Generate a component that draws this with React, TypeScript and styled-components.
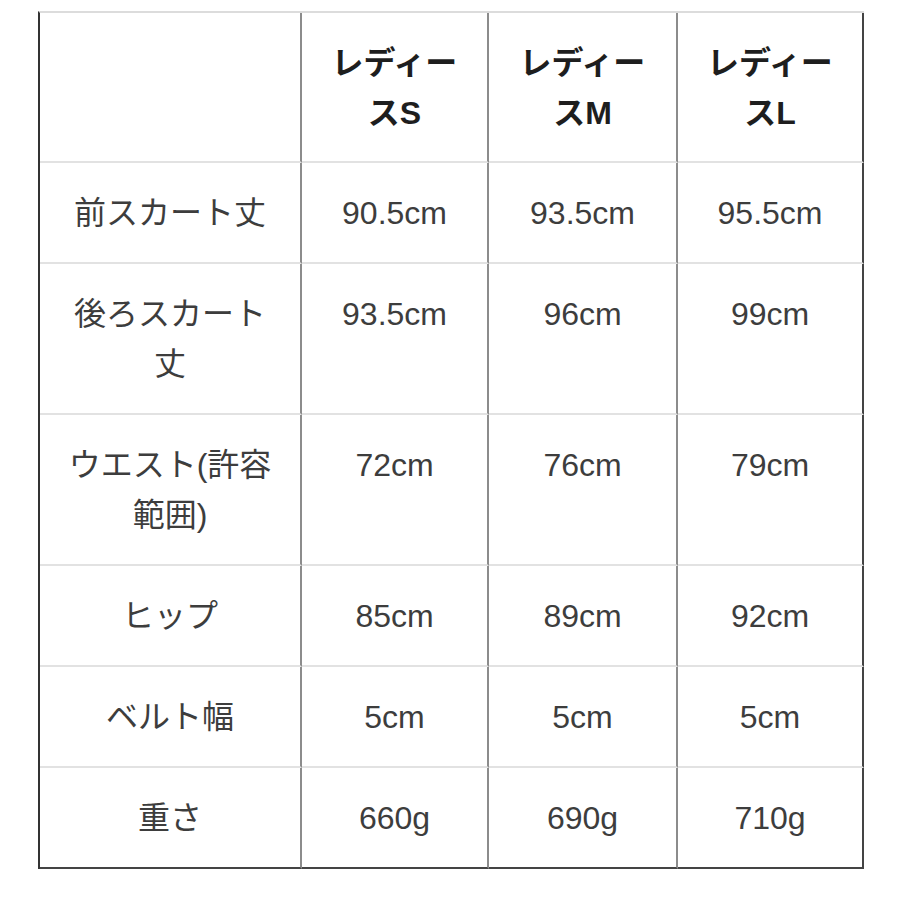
import styled, { createGlobalStyle } from 'styled-components';

const GlobalStyle = createGlobalStyle`
  html, body {
    margin: 0;
    padding: 0;
    background: #ffffff;
  }
  body {
    font-family: 'Liberation Sans', 'Noto Sans CJK JP', sans-serif;
  }
`;

const Page = styled.div`
  padding: 11px 0 0 38px;
`;

const Table = styled.table`
  width: 824px;
  table-layout: fixed;
  border-collapse: separate;
  border-spacing: 0;
  border-left: 2px solid #333333;
  border-top: 2px solid #dcdcdc;
`;

interface CellProps {
  $lastCol?: boolean;
  $lastRow?: boolean;
}

const Cell = styled.td<CellProps>`
  padding: 25px 4px 24px;
  text-align: center;
  vertical-align: top;
  font-size: 32px;
  line-height: 50px;
  color: #3d3d3d;
  border-right: 2px solid ${({ $lastCol }) => ($lastCol ? '#444444' : '#8c8c8c')};
  border-bottom: 2px solid ${({ $lastRow }) => ($lastRow ? '#444444' : '#e2e2e2')};
`;

const HeadCell = styled(Cell).attrs({ as: 'th' })`
  padding-bottom: 23px;
  font-weight: 700;
  color: #1e1e1e;
`;

const headers = [
  ['', ''],
  ['レディー', 'スS'],
  ['レディー', 'スM'],
  ['レディー', 'スL'],
];

const rows: Array<{ label: string[]; values: string[] }> = [
  { label: ['前スカート丈'], values: ['90.5cm', '93.5cm', '95.5cm'] },
  { label: ['後ろスカート', '丈'], values: ['93.5cm', '96cm', '99cm'] },
  { label: ['ウエスト(許容', '範囲)'], values: ['72cm', '76cm', '79cm'] },
  { label: ['ヒップ'], values: ['85cm', '89cm', '92cm'] },
  { label: ['ベルト幅'], values: ['5cm', '5cm', '5cm'] },
  { label: ['重さ'], values: ['660g', '690g', '710g'] },
];

const widths = [262, 187, 189, 186];

function Lines({ parts }: { parts: string[] }) {
  return (
    <>
      {parts.map((p, i) => (
        <span key={i}>
          {i > 0 && <br />}
          {p || '\u00a0'}
        </span>
      ))}
    </>
  );
}

export default function App() {
  return (
    <>
      <GlobalStyle />
      <Page>
        <Table>
          <colgroup>
            {widths.map((w, i) => (
              <col key={i} style={{ width: w }} />
            ))}
          </colgroup>
          <thead>
            <tr>
              {headers.map((h, i) => (
                <HeadCell key={i} $lastCol={i === headers.length - 1}>
                  <Lines parts={h} />
                </HeadCell>
              ))}
            </tr>
          </thead>
          <tbody>
            {rows.map((row, r) => {
              const last = r === rows.length - 1;
              return (
                <tr key={r}>
                  <Cell $lastRow={last}>
                    <Lines parts={row.label} />
                  </Cell>
                  {row.values.map((v, c) => (
                    <Cell key={c} $lastRow={last} $lastCol={c === row.values.length - 1}>
                      {v}
                    </Cell>
                  ))}
                </tr>
              );
            })}
          </tbody>
        </Table>
      </Page>
    </>
  );
}
